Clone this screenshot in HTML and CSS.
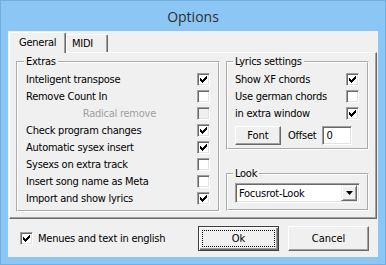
FILE: index.html
```html
<!DOCTYPE html>
<html lang="en">
<head>
  <meta charset="UTF-8">
  <title>Options</title>
  <link rel="stylesheet" href="styles.css">
</head>
<body>
  <div class="window">
    <div class="titlebar">Options</div>

    <div class="client">
      <!-- Pestañas -->
      <div class="tabs">
        <div class="tab active">General</div>
        <div class="tab">MIDI</div>
      </div>

      <div class="page">
        <fieldset class="group extras">
          <legend>Extras</legend>
          <div class="row"><span>Inteligent transpose</span><span class="cb"><svg viewBox="0 0 7 7"><path d="M0 2h1v1h1v1h1V3h1V2h1V1h1V0h1v3H6v1H5v1H4v1H3v1H2V6H1V5H0z"/></svg></span></div>
          <div class="row"><span>Remove Count In</span><span class="cb"></span></div>
          <div class="row disabled"><span class="sub">Radical remove</span><span class="cb"></span></div>
          <div class="row"><span>Check program changes</span><span class="cb"><svg viewBox="0 0 7 7"><path d="M0 2h1v1h1v1h1V3h1V2h1V1h1V0h1v3H6v1H5v1H4v1H3v1H2V6H1V5H0z"/></svg></span></div>
          <div class="row"><span>Automatic sysex insert</span><span class="cb"><svg viewBox="0 0 7 7"><path d="M0 2h1v1h1v1h1V3h1V2h1V1h1V0h1v3H6v1H5v1H4v1H3v1H2V6H1V5H0z"/></svg></span></div>
          <div class="row"><span>Sysexs on extra track</span><span class="cb"></span></div>
          <div class="row"><span>Insert song name as Meta</span><span class="cb"></span></div>
          <div class="row"><span>Import and show lyrics</span><span class="cb"><svg viewBox="0 0 7 7"><path d="M0 2h1v1h1v1h1V3h1V2h1V1h1V0h1v3H6v1H5v1H4v1H3v1H2V6H1V5H0z"/></svg></span></div>
        </fieldset>

        <div class="side">
          <fieldset class="group lyrics">
            <legend>Lyrics settings</legend>
            <div class="row"><span>Show XF chords</span><span class="cb"><svg viewBox="0 0 7 7"><path d="M0 2h1v1h1v1h1V3h1V2h1V1h1V0h1v3H6v1H5v1H4v1H3v1H2V6H1V5H0z"/></svg></span></div>
            <div class="row"><span>Use german chords</span><span class="cb"></span></div>
            <div class="row"><span>in extra window</span><span class="cb"><svg viewBox="0 0 7 7"><path d="M0 2h1v1h1v1h1V3h1V2h1V1h1V0h1v3H6v1H5v1H4v1H3v1H2V6H1V5H0z"/></svg></span></div>
            <div class="font-row">
              <button class="btn font-btn">Font</button>
              <span class="offset-label">Offset</span>
              <span class="input">0</span>
            </div>
          </fieldset>

          <fieldset class="group look">
            <legend>Look</legend>
            <div class="select">
              <span class="select-text">Focusrot-Look</span>
              <span class="drop"><svg viewBox="0 0 7 4"><path d="M0 0h7l-3.5 4z"/></svg></span>
            </div>
          </fieldset>
        </div>
      </div>

      <div class="footer">
        <div class="check">
          <span class="cb"><svg viewBox="0 0 7 7"><path d="M0 2h1v1h1v1h1V3h1V2h1V1h1V0h1v3H6v1H5v1H4v1H3v1H2V6H1V5H0z"/></svg></span>
          <span>Menues and text in english</span>
        </div>
        <div class="buttons">
          <button class="btn default">Ok</button>
          <button class="btn">Cancel</button>
        </div>
      </div>
    </div>
  </div>
</body>
</html>
```

FILE: styles.css
```css
/* Reinicio */
* {
  box-sizing: border-box;
}

body {
  margin: 0;
  font-family: "DejaVu Sans Condensed", "Liberation Sans", sans-serif;
  font-size: 11px;
  letter-spacing: -0.25px;
  color: #000;
}

/* Marco de la ventana */
.window {
  width: 386px;
  height: 265px;
  background: #8cc6f5;
  border: 1px solid #72aee0;
  padding: 0 7px 7px;
  display: flex;
  flex-direction: column;
}

.titlebar {
  height: 30px;
  display: flex;
  align-items: center;
  justify-content: center;
  padding-top: 1px;
  font-family: "Open Sans", sans-serif;
  font-size: 14px;
  letter-spacing: 0;
  color: #2f2f2f;
}

.client {
  flex: 1;
  background: #f0f0f0;
  padding: 1px 1px 0;
  display: flex;
  flex-direction: column;
}

/* Pestañas */
.tabs {
  display: flex;
  align-items: flex-end;
  height: 20px;
  position: relative;
  z-index: 1;
}

.tab {
  height: 18px;
  width: 42px;
  padding: 2px 0 0 5px;
  background: #f0f0f0;
  border: 1px solid;
  border-bottom: none;
  border-color: #fff #696969 #696969 #fff;
  box-shadow: inset -1px 0 0 #a0a0a0;
  border-radius: 2px 2px 0 0;
}

.tab.active {
  width: 57px;
  height: 21px;
  margin-bottom: -1px;
  padding: 3px 0 0 9px;
}

.page {
  height: 167px;
  border: 1px solid;
  border-color: #fff #696969 #696969 #fff;
  box-shadow: inset -1px -1px 0 #a0a0a0;
  padding: 2px 7px 0 6px;
  display: flex;
  gap: 6px;
  align-items: flex-start;
}

/* Grupos */
.group {
  margin: 0;
  min-width: 0;
  border: 2px groove #fff;
  padding: 2px 8px 3px 8px;
}

.group legend {
  padding: 0 2px;
  margin-left: -2px;
  line-height: 14px;
}

.extras {
  width: 205px;
}

.side {
  width: 143px;
  display: flex;
  flex-direction: column;
}

.lyrics {
  padding: 2px 8px 3px 7px;
}

.look {
  margin-top: 17px;
  padding: 2px 7px 6px 7px;
}

.row {
  height: 17px;
  display: flex;
  align-items: center;
  justify-content: space-between;
}

.row.disabled {
  justify-content: flex-end;
  gap: 41px;
  color: #a0a0a0;
}

/* Casillas */
.cb {
  width: 13px;
  height: 13px;
  flex: none;
  background: #fff;
  border: 1px solid;
  border-color: #a0a0a0 #fff #fff #a0a0a0;
  box-shadow: inset 1px 1px 0 #696969, inset -1px -1px 0 #e3e3e3;
  display: flex;
  align-items: center;
  justify-content: center;
}

.cb svg {
  width: 7px;
  height: 7px;
  shape-rendering: crispEdges;
}

.disabled .cb {
  background: #f0f0f0;
}

.font-row {
  display: flex;
  align-items: center;
  margin-top: 4px;
  height: 19px;
}

.offset-label {
  margin: 0 6px 0 7px;
}

.input {
  width: 30px;
  height: 19px;
  background: #fff;
  border: 1px solid;
  border-color: #a0a0a0 #fff #fff #a0a0a0;
  box-shadow: inset 1px 1px 0 #696969, inset -1px -1px 0 #e3e3e3;
  padding: 2px 0 0 3px;
}

.select {
  width: 125px;
  height: 20px;
  background: #fff;
  border: 1px solid;
  border-color: #a0a0a0 #fff #fff #a0a0a0;
  box-shadow: inset 1px 1px 0 #696969, inset -1px -1px 0 #e3e3e3;
  padding: 2px;
  display: flex;
  align-items: center;
}

.select-text {
  flex: 1;
  padding-left: 1px;
}

.drop {
  width: 16px;
  height: 16px;
  background: #f0f0f0;
  border: 1px solid;
  border-color: #f0f0f0 #696969 #696969 #f0f0f0;
  box-shadow: inset 1px 1px 0 #fff, inset -1px -1px 0 #a0a0a0;
  display: flex;
  align-items: center;
  justify-content: center;
}

.drop svg {
  width: 7px;
  height: 4px;
}

/* Botones */
.btn {
  font: inherit;
  color: #000;
  background: #f0f0f0;
  border: 1px solid;
  border-color: #fff #696969 #696969 #fff;
  box-shadow: inset -1px -1px 0 #a0a0a0;
  padding: 0;
  position: relative;
}

.font-btn {
  width: 46px;
  height: 19px;
}

.footer {
  display: flex;
  align-items: center;
  justify-content: space-between;
  padding: 7px 8px 0 11px;
}

.check {
  display: flex;
  align-items: center;
  gap: 5px;
}

.buttons {
  display: flex;
  gap: 9px;
}

.buttons .btn {
  width: 81px;
  height: 25px;
}

.btn.default {
  border: 1px solid #404040;
  box-shadow: inset 1px 1px 0 #fff, inset -1px -1px 0 #696969, inset -2px -2px 0 #a0a0a0;
}

/* Rectángulo de foco punteado */
.btn.default::after {
  content: "";
  position: absolute;
  inset: 3px;
  border: 1px dotted #000;
}
```
